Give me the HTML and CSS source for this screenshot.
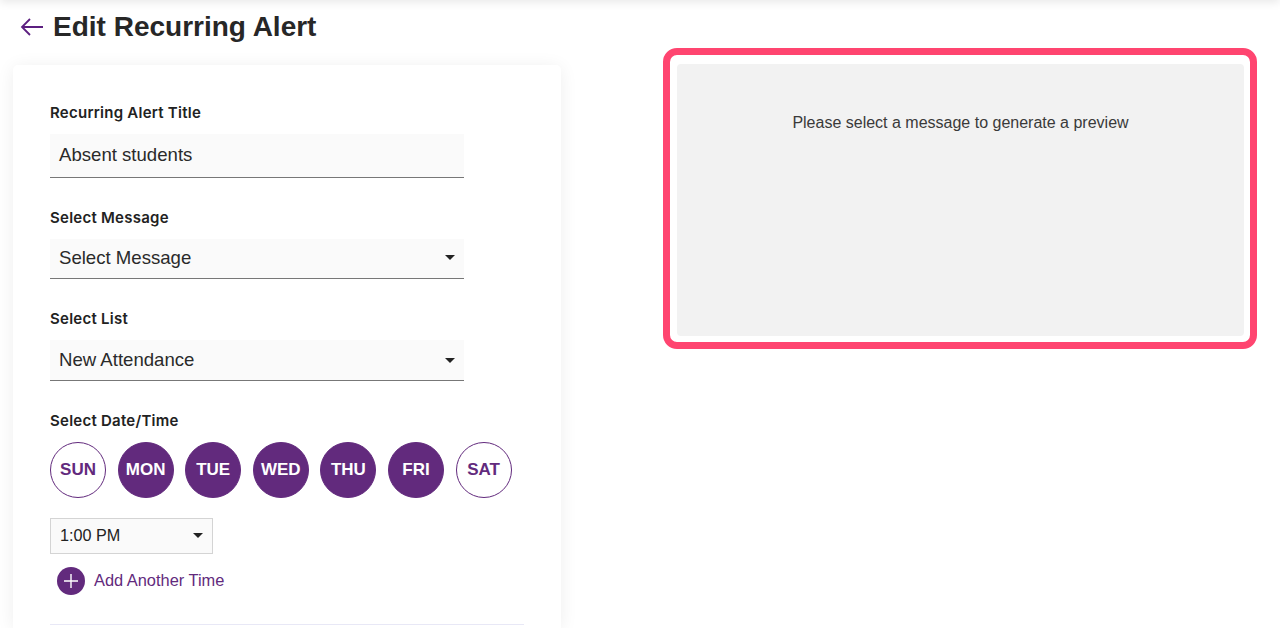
FILE: index.html
```html
<!DOCTYPE html>
<html lang="en">
<head>
<meta charset="utf-8">
<title>Edit Recurring Alert</title>
<link rel="stylesheet" href="styles.css">
</head>
<body>
<div class="topshade"></div>
<main class="page">
  <section class="left">
    <header class="head">
      <svg class="back" width="24" height="20" viewBox="0 0 24 20" fill="none" stroke="#5c1f80" stroke-width="1.8"><path d="M23 10H2M10 2 2 10l8 8"/></svg>
      <h1 class="title">Edit Recurring Alert</h1>
    </header>
    <form class="card">
      <div class="label first">Recurring Alert Title</div>
      <div class="field"><span>Absent students</span></div>
      <div class="label l2">Select Message</div>
      <div class="field short"><span>Select Message</span><i class="caret"></i></div>
      <div class="label l2">Select List</div>
      <div class="field sel"><span>New Attendance</span><i class="caret"></i></div>
      <div class="label l3">Select Date/Time</div>
      <div class="days">
        <span class="day">SUN</span>
        <span class="day on">MON</span>
        <span class="day on">TUE</span>
        <span class="day on">WED</span>
        <span class="day on">THU</span>
        <span class="day on">FRI</span>
        <span class="day">SAT</span>
      </div>
      <div class="time"><span>1:00 PM</span><i class="caret"></i></div>
      <div class="add">
        <svg class="plus" width="28" height="28" viewBox="0 0 28 28"><circle cx="14" cy="14" r="14" fill="#622a7d"/><path d="M14 7v14M7 14h14" stroke="#fff" stroke-width="1.4"/></svg>
        <span class="addtext">Add Another Time</span>
      </div>
      <hr class="rule">
    </form>
  </section>
  <section class="right">
    <div class="frame">
      <div class="preview">Please select a message to generate a preview</div>
    </div>
  </section>
</main>
</body>
</html>
```
FILE: styles.css
```css
* { box-sizing: border-box; }
html, body { margin: 0; height: 628px; overflow: hidden; background: #fff; }
body { font-family: "Liberation Sans", Arial, sans-serif; color: #222; position: relative; }
.topshade { position: absolute; left: 0; right: 0; top: -10px; height: 10px; box-shadow: 0 2px 10px rgba(0,0,0,.1); }
.page { display: flex; height: 628px; overflow: hidden; }
.left { width: 663px; flex: none; padding-left: 13px; }
.head { display: flex; align-items: center; gap: 9px; height: 54px; padding-left: 7px; }
.back { flex: none; }
.title { margin: 0; font-size: 28px; font-weight: 700; color: #272727; line-height: 32px; }
.card { width: 548px; height: 563px; margin-top: 11px; padding: 39px 37px 0; background: #fff; border-radius: 5px 5px 0 0; box-shadow: 0 2px 18px rgba(0,0,0,.07); }
.label { font-family: Inter, "Liberation Sans", sans-serif; font-size: 15px; font-weight: 600; line-height: 18px; color: #222; letter-spacing: .25px; }
.l2 { margin-top: 31px; }
.l3 { margin-top: 31px; }
.field { display: flex; align-items: center; justify-content: space-between; width: 414px; height: 44px; margin-top: 12px; padding: 0 9px 2px; background: #fafafa; border-bottom: 1px solid #777; font-size: 18.6px; color: #2a2a2a; }
.sel { height: 41px; padding-bottom: 0; }
.short { height: 40px; }
.caret { width: 0; height: 0; border: 5px solid transparent; border-top-color: #222; border-bottom: 0; }
.days { display: flex; gap: 11.6px; margin-top: 12px; }
.day { display: flex; align-items: center; justify-content: center; width: 56px; height: 56px; border-radius: 50%; border: 1px solid #622a7d; background: #fff; color: #622a7d; font-size: 17px; font-weight: 700; }
.day.on { background: #622a7d; color: #fff; }
.time { display: flex; align-items: center; justify-content: space-between; width: 163px; height: 36px; margin-top: 20px; padding: 0 9px 2px; background: #fafafa; border: 1px solid #d4d4d4; font-size: 16.2px; color: #222; }
.add { display: flex; align-items: center; gap: 9px; margin-top: 13px; padding-left: 7px; color: #622a7d; font-size: 16.4px; }
.addtext { margin-bottom: 2px; }
.plus { flex: none; }
.rule { width: 474px; margin: 29px 0 0; border: 0; border-top: 1px solid #e8e8f6; }
.right { flex: none; width: 594px; padding-top: 48px; }
.frame { width: 594px; height: 301px; padding: 9px 6px 7px 7px; border: 7px solid #ff4570; border-radius: 14px; background: #fff; }
.preview { height: 272px; padding-top: 49px; background: #f2f2f2; border-radius: 4px; text-align: center; font-size: 16px; line-height: 20px; color: #3a3a3a; }
```
